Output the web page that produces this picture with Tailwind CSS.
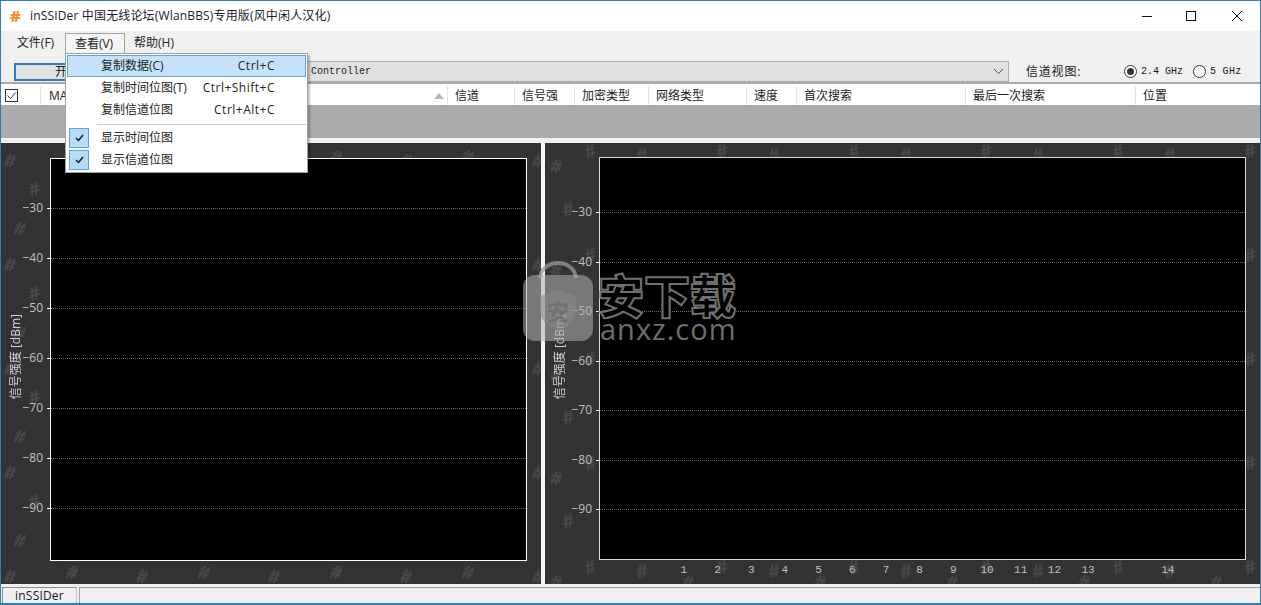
<!DOCTYPE html>
<html lang="zh-CN">
  <head>
    <meta charset="UTF-8" />
    <title>inSSIDer</title>
    <script src="https://cdn.jsdelivr.net/npm/@tailwindcss/browser@4"></script>
  </head>

  <body class="overflow-hidden bg-[#f0f0f0]">
    <div class="relative flex h-[605px] w-[1261px] flex-col overflow-hidden border border-b-2 border-[#2f7fb5] text-[12px] text-[#1a1a1a] [font-family:'Open_Sans','Noto_Sans_CJK_SC',sans-serif]">
      <!-- Title bar -->
      <header class="flex h-[30px] shrink-0 items-center bg-white pl-[9px]">
        <span class="w-[20px] text-[16px] leading-none font-extrabold text-[#f0913a]">#</span>
        <span class="text-[12px] tracking-[0.16px] text-[#222]">inSSIDer 中国无线论坛(WlanBBS)专用版(风中闲人汉化)</span>
        <div class="ml-auto flex items-center">
          <svg class="mr-[32px]" width="12" height="12" viewBox="0 0 12 12"><path d="M1 6.500h10" stroke="#111" fill="none" /></svg>
          <svg class="mr-[34px]" width="12" height="12" viewBox="0 0 12 12"><rect x="1.500" y="1.500" width="9" height="9" stroke="#111" fill="none" /></svg>
          <svg class="mr-[17px]" width="12" height="12" viewBox="0 0 12 12"><path d="M1 1l10 10M11 1L1 11" stroke="#111" fill="none" /></svg>
        </div>
      </header>

      <!-- Menu bar -->
      <nav class="flex h-[24px] shrink-0 items-start pt-[2px] pl-[5px] text-[#222]">
        <span class="flex h-[20px] w-[59px] items-center justify-center">文件(F)</span>
        <span class="flex h-[21px] w-[60px] items-center justify-center border border-b-0 border-[#a0a0a0] bg-[#f5f5f5] pr-[2px]">查看(V)</span>
        <span class="flex h-[20px] w-[58px] items-center justify-center">帮助(H)</span>
      </nav>

      <!-- Toolbar -->
      <div class="flex h-[29px] shrink-0 items-center border-b-2 border-[#a9a9a9] pt-[6px] pl-[13px]">
        <button class="h-[18px] w-[106px] border-2 border-[#2b7cc0] bg-[#e1e1e1] leading-[14px]">开始</button>
        <div class="ml-[10px] flex h-[21px] w-[879px] items-center justify-between border border-[#adadad] bg-[#e1e1e1] pr-[4px] pl-[180px] text-[10px] text-[#222] [font-family:'Liberation_Mono',monospace]">
          <span>Controller</span>
          <svg width="11" height="7" viewBox="0 0 11 7"><path d="M1 1l4.500 4.500L10 1" stroke="#555" fill="none" /></svg>
        </div>
        <span class="ml-[17px] w-[98px] text-[12px] tracking-[0.8px]">信道视图:</span>
        <label class="flex items-center gap-[4px] text-[10px] [font-family:'Liberation_Mono',monospace]">
          <span class="flex h-[13px] w-[13px] items-center justify-center rounded-full border border-[#333] bg-white"><span class="h-[7px] w-[7px] rounded-full bg-[#333]"></span></span>
          2.4 GHz
        </label>
        <label class="ml-[10px] flex items-center gap-[4px] text-[10px] tracking-[0.3px] [font-family:'Liberation_Mono',monospace]">
          <span class="h-[13px] w-[13px] rounded-full border border-[#333] bg-white"></span>
          5 GHz
        </label>
      </div>

      <!-- List header -->
      <div class="flex h-[21px] shrink-0 items-center bg-white pt-[2px] text-[12px] text-[#222]">
        <div class="flex h-full w-[40px] items-center border-r border-[#e5e5e5] pl-[4px]">
          <span class="flex h-[13px] w-[13px] items-center justify-center border border-[#333]">
            <svg width="11" height="11" viewBox="0 0 11 11"><path d="M1.500 5.500l3 3 5-6" stroke="#333" fill="none" /></svg>
          </span>
        </div>
        <div class="flex h-full w-[407px] items-center justify-between border-r border-[#e5e5e5] pr-[3px] pl-[8px]">
          <span>MAC</span>
          <svg width="10" height="6" viewBox="0 0 10 6"><path d="M5 0l5 6H0z" fill="#b5b5b5" /></svg>
        </div>
        <div class="flex h-full w-[67px] items-center border-r border-[#e5e5e5] pl-[7px]">信道</div>
        <div class="flex h-full w-[60px] items-center border-r border-[#e5e5e5] pl-[7px]">信号强</div>
        <div class="flex h-full w-[74px] items-center border-r border-[#e5e5e5] pl-[7px]">加密类型</div>
        <div class="flex h-full w-[98px] items-center border-r border-[#e5e5e5] pl-[7px]">网络类型</div>
        <div class="flex h-full w-[50px] items-center border-r border-[#e5e5e5] pl-[7px]">速度</div>
        <div class="flex h-full w-[169px] items-center border-r border-[#e5e5e5] pl-[7px]">首次搜索</div>
        <div class="flex h-full w-[170px] items-center border-r border-[#e5e5e5] pl-[7px]">最后一次搜索</div>
        <div class="flex h-full flex-1 items-center pl-[7px]">位置</div>
      </div>

      <!-- Empty list area -->
      <div class="h-[33px] shrink-0 bg-[#ababab]"></div>
      <div class="h-[5px] shrink-0 bg-[#f0f0f0]"></div>

      <!-- Charts -->
      <main class="relative flex min-h-0 flex-1 gap-[4px] bg-[#f4f4f4] text-[12px] text-[#c0c0c0]">
        <!-- Left: time graph -->
        <section class="relative flex w-[540px] overflow-hidden bg-[#333]">
          <svg class="absolute inset-0 h-full w-full blur-[0.5px]" aria-hidden="true">
            <defs>
              <pattern id="hashLeft" width="132" height="104" patternUnits="userSpaceOnUse">
                <g font-size="18" font-weight="700" font-family="Liberation Sans" fill="#474747" stroke="#474747" stroke-width="0.800">
                  <text x="4" y="24" transform="rotate(12 10 18)">#</text>
                  <text x="28" y="52" transform="rotate(-14 34 46)">#</text>
                  <text x="66" y="20" transform="rotate(18 72 14)">#</text>
                  <text x="84" y="66" transform="rotate(-8 90 60)">#</text>
                  <text x="14" y="92" transform="rotate(16 20 86)">#</text>
                  <text x="112" y="98" transform="rotate(-18 118 92)">#</text>
                </g>
              </pattern>
            </defs>
            <rect width="100%" height="100%" fill="url(#hashLeft)" />
          </svg>
          <div class="relative flex h-full w-[49px] flex-col items-end pt-[65px]">
            <div class="flex h-[50px] shrink-0 items-start"><span class="-mt-[9px] pr-[4px]">−30</span><i class="w-[3px] border-t border-white"></i></div>
            <div class="flex h-[50px] shrink-0 items-start"><span class="-mt-[9px] pr-[4px]">−40</span><i class="w-[3px] border-t border-white"></i></div>
            <div class="flex h-[50px] shrink-0 items-start"><span class="-mt-[9px] pr-[4px]">−50</span><i class="w-[3px] border-t border-white"></i></div>
            <div class="flex h-[50px] shrink-0 items-start"><span class="-mt-[9px] pr-[4px]">−60</span><i class="w-[3px] border-t border-white"></i></div>
            <div class="flex h-[50px] shrink-0 items-start"><span class="-mt-[9px] pr-[4px]">−70</span><i class="w-[3px] border-t border-white"></i></div>
            <div class="flex h-[50px] shrink-0 items-start"><span class="-mt-[9px] pr-[4px]">−80</span><i class="w-[3px] border-t border-white"></i></div>
            <div class="flex h-[50px] shrink-0 items-start"><span class="-mt-[9px] pr-[4px]">−90</span><i class="w-[3px] border-t border-white"></i></div>
            <span class="absolute top-[171px] left-[8px] rotate-180 text-[12px] leading-[14px] whitespace-nowrap text-[#d0d0d0] [text-orientation:sideways] [writing-mode:vertical-rl]">信号强度 [dBm]</span>
          </div>
          <div class="relative mt-[15px] h-[403px] w-[477px] border border-white bg-black pt-[49px]">
            <div class="h-[50px] border-t border-dotted border-[#666]"></div>
            <div class="h-[50px] border-t border-dotted border-[#666]"></div>
            <div class="h-[50px] border-t border-dotted border-[#666]"></div>
            <div class="h-[50px] border-t border-dotted border-[#666]"></div>
            <div class="h-[50px] border-t border-dotted border-[#666]"></div>
            <div class="h-[50px] border-t border-dotted border-[#666]"></div>
            <div class="h-[50px] border-t border-dotted border-[#666]"></div>
          </div>
        </section>

        <!-- Right: channel graph -->
        <section class="relative flex flex-1 overflow-hidden bg-[#333]">
          <svg class="absolute inset-0 h-full w-full blur-[0.5px]" aria-hidden="true">
            <defs>
              <pattern id="hashRight" width="132" height="104" patternUnits="userSpaceOnUse">
                <g font-size="18" font-weight="700" font-family="Liberation Sans" fill="#474747" stroke="#474747" stroke-width="0.800">
                  <text x="6" y="30" transform="rotate(12 12 24)">#</text>
                  <text x="40" y="14" transform="rotate(-14 46 8)">#</text>
                  <text x="18" y="72" transform="rotate(-10 24 66)">#</text>
                  <text x="72" y="54" transform="rotate(18 78 48)">#</text>
                  <text x="92" y="18" transform="rotate(-8 98 12)">#</text>
                  <text x="106" y="92" transform="rotate(16 112 86)">#</text>
                </g>
              </pattern>
            </defs>
            <rect width="100%" height="100%" fill="url(#hashRight)" />
          </svg>
          <div class="relative flex h-full w-[54px] flex-col items-end pt-[69px]">
            <div class="flex h-[49.500px] shrink-0 items-start"><span class="-mt-[9px] pr-[4px]">−30</span><i class="w-[3px] border-t border-white"></i></div>
            <div class="flex h-[49.500px] shrink-0 items-start"><span class="-mt-[9px] pr-[4px]">−40</span><i class="w-[3px] border-t border-white"></i></div>
            <div class="flex h-[49.500px] shrink-0 items-start"><span class="-mt-[9px] pr-[4px]">−50</span><i class="w-[3px] border-t border-white"></i></div>
            <div class="flex h-[49.500px] shrink-0 items-start"><span class="-mt-[9px] pr-[4px]">−60</span><i class="w-[3px] border-t border-white"></i></div>
            <div class="flex h-[49.500px] shrink-0 items-start"><span class="-mt-[9px] pr-[4px]">−70</span><i class="w-[3px] border-t border-white"></i></div>
            <div class="flex h-[49.500px] shrink-0 items-start"><span class="-mt-[9px] pr-[4px]">−80</span><i class="w-[3px] border-t border-white"></i></div>
            <div class="flex h-[49.500px] shrink-0 items-start"><span class="-mt-[9px] pr-[4px]">−90</span><i class="w-[3px] border-t border-white"></i></div>
            <span class="absolute top-[171px] left-[8px] rotate-180 text-[12px] leading-[14px] whitespace-nowrap text-[#d0d0d0] [text-orientation:sideways] [writing-mode:vertical-rl]">信号强度 [dBm]</span>
          </div>
          <div class="relative">
            <div class="mt-[14px] h-[403px] w-[647px] border border-[#d8d8d8] bg-black pt-[54px]">
              <div class="h-[49.500px] border-t border-dotted border-[#666]"></div>
              <div class="h-[49.500px] border-t border-dotted border-[#666]"></div>
              <div class="h-[49.500px] border-t border-dotted border-[#666]"></div>
              <div class="h-[49.500px] border-t border-dotted border-[#666]"></div>
              <div class="h-[49.500px] border-t border-dotted border-[#666]"></div>
              <div class="h-[49.500px] border-t border-dotted border-[#666]"></div>
              <div class="h-[49.500px] border-t border-dotted border-[#666]"></div>
            </div>
            <div class="relative mt-[2px] flex pl-[68px] text-[11px] leading-[16px] [font-family:'Liberation_Mono',monospace]">
              <span class="w-[33.700px] text-center">1</span>
              <span class="w-[33.700px] text-center">2</span>
              <span class="w-[33.700px] text-center">3</span>
              <span class="w-[33.700px] text-center">4</span>
              <span class="w-[33.700px] text-center">5</span>
              <span class="w-[33.700px] text-center">6</span>
              <span class="w-[33.700px] text-center">7</span>
              <span class="w-[33.700px] text-center">8</span>
              <span class="w-[33.700px] text-center">9</span>
              <span class="w-[33.700px] text-center">10</span>
              <span class="w-[33.700px] text-center">11</span>
              <span class="w-[33.700px] text-center">12</span>
              <span class="w-[33.700px] text-center">13</span>
              <span class="ml-[46px] w-[33.700px] text-center">14</span>
            </div>
          </div>
        </section>
      </main>

      <!-- Status bar -->
      <footer class="flex h-[19px] shrink-0 items-end gap-[2px] pl-[1px]">
        <span class="flex h-[16px] w-[75px] items-center justify-center border-t border-r border-l border-t-[#8c8c8c] border-r-[#c8c8c8] border-l-[#8c8c8c] bg-[#f0f0f0] text-[12px] leading-none tracking-[0.2px]">inSSIDer</span>
        <span class="h-[16px] flex-1 border-t border-l border-[#a0a0a0]"></span>
      </footer>

      <!-- Open "view" menu -->
      <div class="absolute top-[52px] left-[64px] w-[243px] border border-[#a0a0a0] bg-white p-[1px] text-[12px] text-[#222] shadow-[2px_2px_2px_rgba(0,0,0,0.25)]">
        <div class="flex h-[22px] items-center border border-[#5ba6d8] bg-[#c6e2fb]">
          <span class="w-[33px]"></span><span>复制数据(C)</span><span class="mr-[30px] ml-auto tracking-[0.5px]">Ctrl+C</span>
        </div>
        <div class="flex h-[22px] items-center">
          <span class="w-[34px]"></span><span>复制时间位图(T)</span><span class="mr-[31px] ml-auto tracking-[0.5px]">Ctrl+Shift+C</span>
        </div>
        <div class="flex h-[22px] items-center">
          <span class="w-[34px]"></span><span>复制信道位图</span><span class="mr-[31px] ml-auto tracking-[0.5px]">Ctrl+Alt+C</span>
        </div>
        <div class="mt-[3px] mb-[2px] ml-[30px] border-t border-[#c8c8c8]"></div>
        <div class="flex h-[22px] items-center">
          <span class="ml-[2px] flex h-[20px] w-[20px] items-center justify-center border border-[#5ba6d8] bg-[#b5dcf7]">
            <svg width="9" height="8" viewBox="0 0 9 8"><path d="M1 4l2.500 2.500L8 1" stroke="#111" stroke-width="1.300" fill="none" /></svg>
          </span>
          <span class="ml-[12px]">显示时间位图</span>
        </div>
        <div class="flex h-[22px] items-center">
          <span class="ml-[2px] flex h-[20px] w-[20px] items-center justify-center border border-[#5ba6d8] bg-[#b5dcf7]">
            <svg width="9" height="8" viewBox="0 0 9 8"><path d="M1 4l2.500 2.500L8 1" stroke="#111" stroke-width="1.300" fill="none" /></svg>
          </span>
          <span class="ml-[12px]">显示信道位图</span>
        </div>
      </div>

      <!-- Watermark -->
      <div class="absolute top-[259px] left-[521px] flex items-start">
        <svg width="72" height="82" viewBox="0 0 72 82">
          <path d="M18 18C20 -2 52 -2 54 18" stroke="#9a9a9a" stroke-opacity="0.75" stroke-width="4" fill="none" />
          <rect x="1" y="15" width="70" height="66" rx="12" fill="#b0b0b0" fill-opacity="0.55" />
          <path d="M36 30l18 6v14c0 11-9 17-18 21-9-4-18-10-18-21V36z" fill="#888" fill-opacity="0.55" />
          <text x="36" y="60" text-anchor="middle" font-size="22" font-weight="700" fill="#555" fill-opacity="0.4" font-family="Noto Sans CJK SC">安</text>
        </svg>
        <div class="ml-[4px] flex flex-col items-start text-[#6e6e6e]">
          <span class="mt-[10px] text-[46px] leading-[46px] font-black tracking-[0px] text-black [-webkit-text-stroke:2px_#707070] [font-family:'Noto_Sans_CJK_SC',sans-serif]">安下载</span>
          <span class="ml-[2px] text-[29px] leading-[26px] font-medium tracking-[1px] [font-family:'Open_Sans',sans-serif]">anxz.com</span>
        </div>
      </div>
    </div>
  </body>
</html>
